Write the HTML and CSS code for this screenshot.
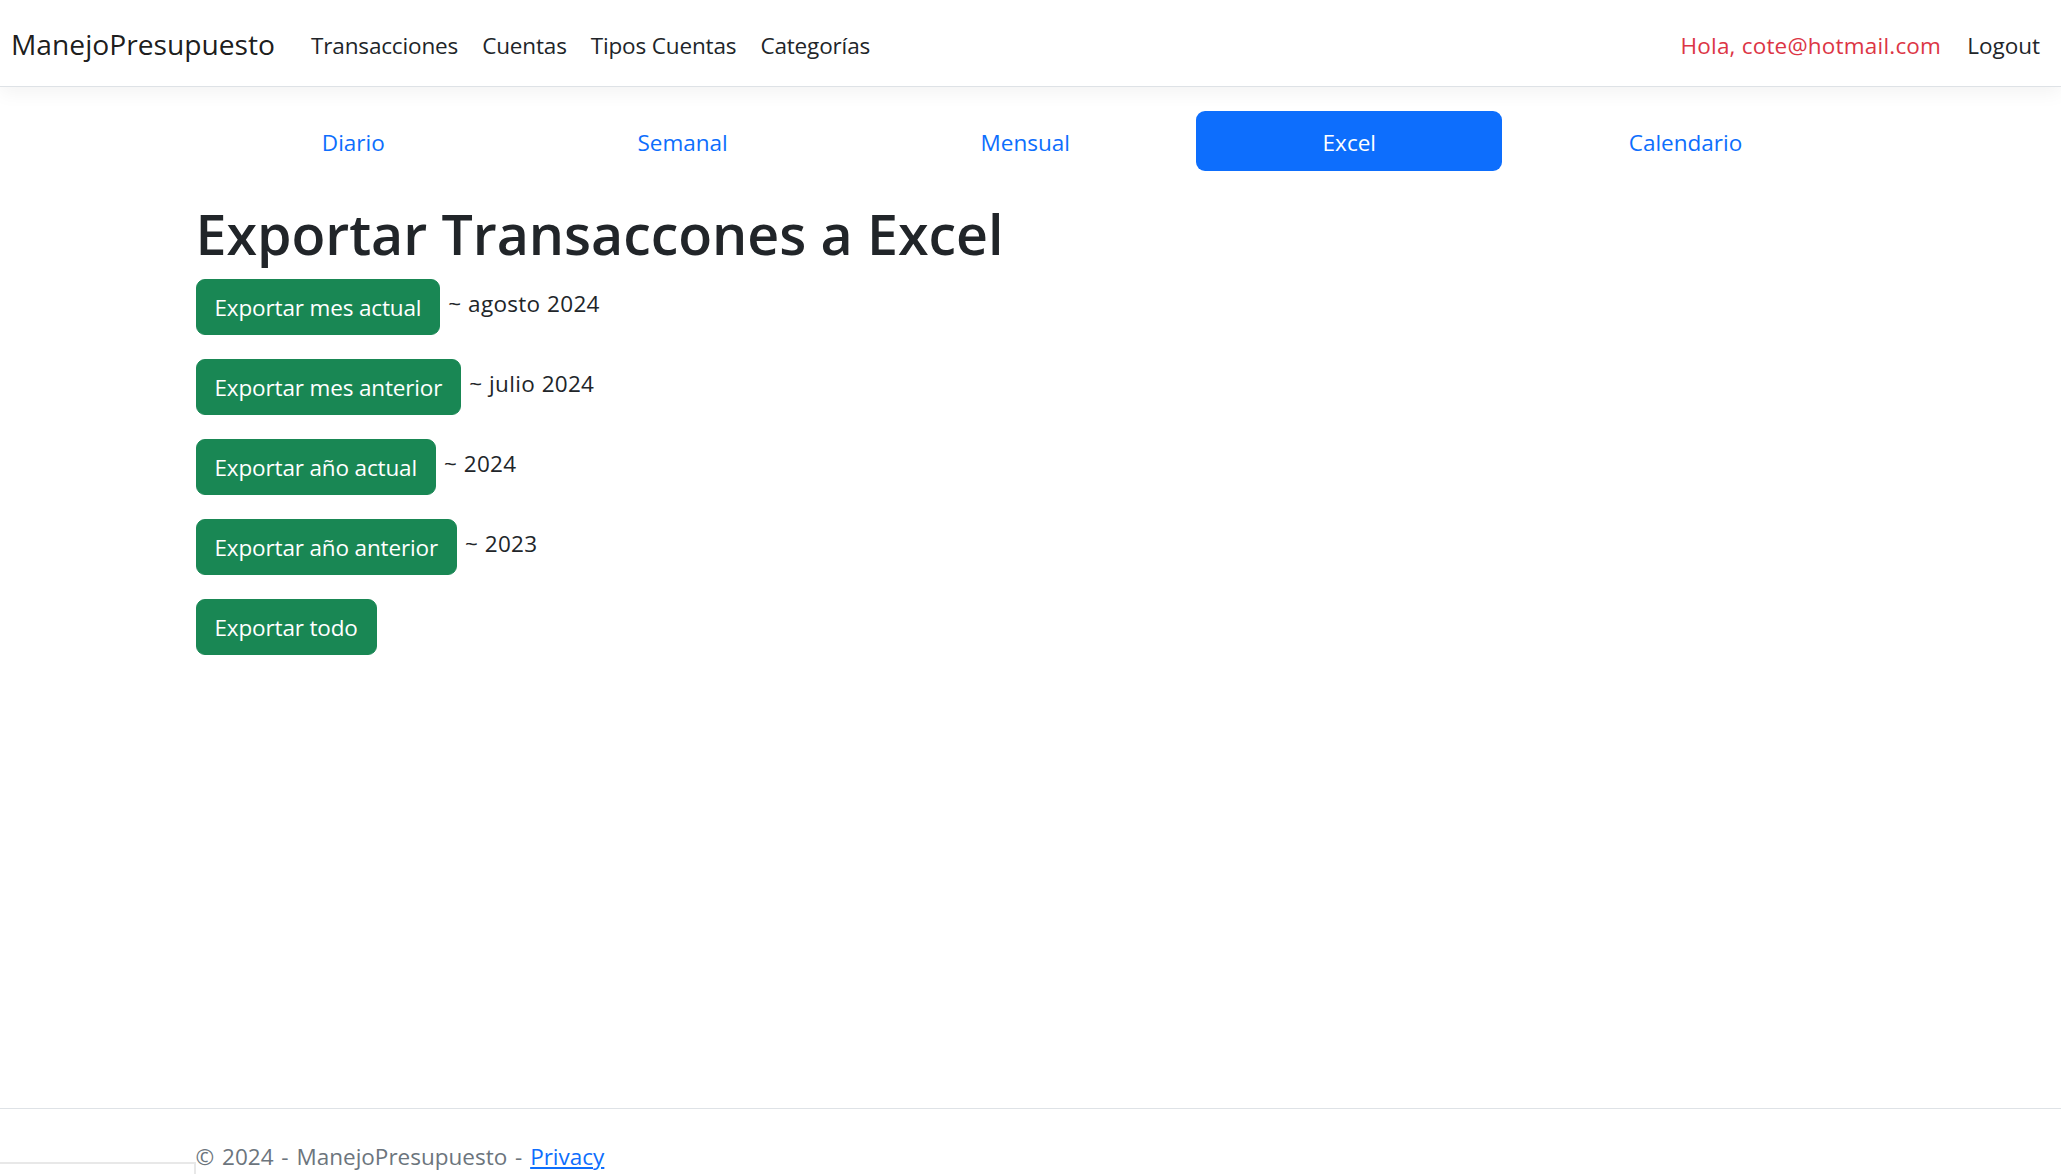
FILE: index.html
```html
<!DOCTYPE html>
<html lang="es">
<head>
<meta charset="utf-8">
<title>Exportar Transacciones - ManejoPresupuesto</title>
<link rel="stylesheet" href="styles.css">
</head>
<body>
<header class="site-header">
  <nav class="navbar">
    <a class="brand" href="#">ManejoPresupuesto</a>
    <ul class="nav-main">
      <li><a class="nav-link" href="#">Transacciones</a></li>
      <li><a class="nav-link" href="#">Cuentas</a></li>
      <li><a class="nav-link" href="#">Tipos Cuentas</a></li>
      <li><a class="nav-link" href="#">Categorías</a></li>
    </ul>
    <ul class="nav-user">
      <li><span class="nav-link hello">Hola, cote@hotmail.com</span></li>
      <li><a class="nav-link" href="#">Logout</a></li>
    </ul>
  </nav>
</header>
<main class="container main">
  <ul class="tabs">
    <li class="tab"><a class="tab-link" href="#">Diario</a></li>
    <li class="tab"><a class="tab-link" href="#">Semanal</a></li>
    <li class="tab"><a class="tab-link" href="#">Mensual</a></li>
    <li class="tab"><a class="tab-link active" href="#">Excel</a></li>
    <li class="tab"><a class="tab-link" href="#">Calendario</a></li>
  </ul>
  <h1 class="title">Exportar Transaccones a Excel</h1>
  <div class="export-row"><a class="btn" href="#">Exportar mes actual</a><span class="period">~ agosto 2024</span></div>
  <div class="export-row"><a class="btn" href="#">Exportar mes anterior</a><span class="period">~ julio 2024</span></div>
  <div class="export-row"><a class="btn" href="#">Exportar año actual</a><span class="period">~ 2024</span></div>
  <div class="export-row"><a class="btn" href="#">Exportar año anterior</a><span class="period">~ 2023</span></div>
  <div class="export-row"><a class="btn" href="#">Exportar todo</a></div>
</main>
<footer class="footer">
  <div class="container">© 2024 - ManejoPresupuesto - <a class="footer-link" href="#">Privacy</a></div>
</footer>
<div class="corner-box"></div>
</body>
</html>
```
FILE: styles.css
```css
html, body {
  margin: 0;
  padding: 0;
}

body {
  font-family: "Open Sans", "Noto Sans", sans-serif;
  font-size: 22.5px;
  line-height: 36px;
  color: #212529;
  background: #fff;
  min-height: 100vh;
  display: flex;
  flex-direction: column;
}

/* ---------- header ---------- */
.site-header {
  background: #fff;
  border-bottom: 1px solid #dee2e6;
  box-shadow: 0 6px 18px rgba(0, 0, 0, 0.05);
  margin-bottom: 24px;
  position: relative;
  z-index: 1;
}

.navbar {
  display: flex;
  align-items: center;
  height: 86px;
  padding: 0 9px 0 11px;
}

.brand {
  font-size: 28.2px;
  line-height: 45px;
  padding-top: 2px;
  color: rgba(0, 0, 0, 0.9);
  text-decoration: none;
  margin-right: 24px;
}

.nav-main,
.nav-user {
  display: flex;
  list-style: none;
  margin: 0;
  padding: 0;
}

.nav-main {
  flex: 1;
  letter-spacing: -0.15px;
}

.nav-link {
  display: block;
  padding: 15px 12px 9px;
  color: #212529;
  text-decoration: none;
}

.hello {
  color: #dc3545;
  letter-spacing: 0.2px;
  margin-right: 2px;
}

/* ---------- main ---------- */
.container {
  width: 1710px;
  margin: 0 auto;
  padding: 0 17px 0 20px;
  box-sizing: border-box;
}

.main {
  flex: 1;
}

.tabs {
  display: flex;
  list-style: none;
  margin: 0;
  padding: 0;
}

.tab {
  flex: 1 1 auto;
  text-align: center;
}

.tab-link {
  display: block;
  padding: 14px 24px 10px;
  color: #0d6efd;
  text-decoration: none;
  border-radius: 9px;
}

.tab-link.active {
  background: #0d6efd;
  color: #fff;
}

.title {
  font-size: 55.5px;
  font-weight: 600;
  line-height: 72px;
  margin: 27px 0 9px;
  color: #212529;
  letter-spacing: -0.05px;
}

.export-row {
  display: flex;
  align-items: flex-start;
  margin-bottom: 24px;
}

.btn {
  display: inline-block;
  padding: 10px 18px 8px;
  border: 1px solid #198754;
  background: #198754;
  color: #fff;
  border-radius: 9px;
  text-decoration: none;
  line-height: 36px;
  letter-spacing: -0.15px;
}

.period {
  margin-left: 8px;
  padding-top: 7px;
  letter-spacing: 0.3px;
  word-spacing: 0.5px;
}

/* ---------- footer ---------- */
.footer {
  height: 65px;
  border-top: 1px solid #dee2e6;
  overflow: hidden;
  line-height: 96px;
  color: #6c757d;
  white-space: nowrap;
  word-spacing: 2px;
}

.footer-link {
  color: #0d6efd;
}

.corner-box {
  position: absolute;
  left: 0;
  bottom: 0;
  width: 194px;
  height: 10px;
  border-top: 2px solid #e8e8e8;
  border-right: 2px solid #e8e8e8;
}
```
